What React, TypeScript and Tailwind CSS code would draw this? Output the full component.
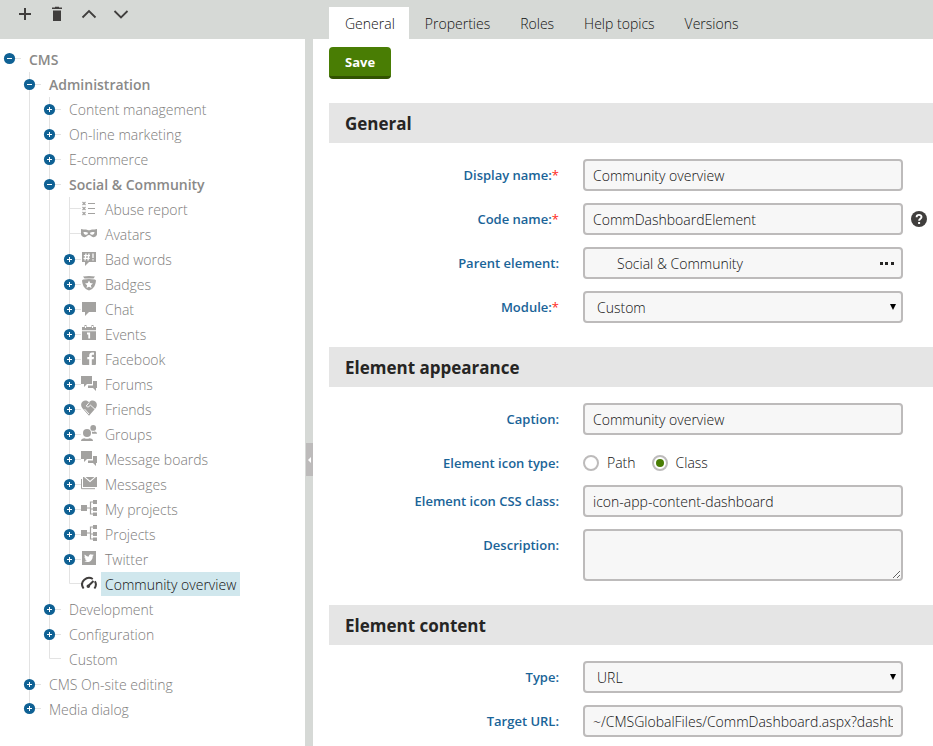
import type { ReactNode } from "react";

type IconName =
  | "list" | "mask" | "badWords" | "badge" | "chat" | "calendar" | "facebook" | "bubbles"
  | "heart" | "group" | "mail" | "scheme" | "twitter" | "gauge";

const icons: Record<IconName, ReactNode> = {
  list: (
    <g stroke="currentColor" strokeWidth="1.1" fill="none">
      <path d="M7 3.5h7M7 8.5h7M7 13.5h7" />
      <path d="M1.5 2l3 3m0-3l-3 3M1.5 7l3 3m0-3l-3 3M1.5 12l3 3m0-3l-3 3" />
    </g>
  ),
  mask: (
    <path
      fillRule="evenodd"
      d="M0 4c2 .8 3.600 .3 5 .4 1.200 .100 2 .8 3 .8s1.800-.7 3-.8c1.400-.1 3 .4 5-.4v5.500c-.7 1.700-2 2.700-3.700 2.700-1.900 0-2.700-2.200-4.300-2.200S5.600 12.200 3.700 12.200C2 12.200.7 11.200 0 9.500zM2.400 7.300c.4 1.900 1.500 2.500 2.800 2.500 1 0 1.700-.9 1.800-2-1.400-1-3-1.200-4.600-.5zm11.200 0c-.4 1.900-1.500 2.500-2.800 2.500-1 0-1.700-.9-1.800-2 1.400-1 3-1.200 4.600-.5z"
    />
  ),
  badWords: (
    <g>
      <path d="M1 2h14v10H8l-4 4v-4H1z" />
      <path d="M5 3.500L4 10.500M8 3.500L7 10.500M2.800 5.700h6.200M2.500 8.400h6.200M12 3.500v4.500M12 9.200v1.400" stroke="#fff" strokeWidth="1.300" fill="none" />
    </g>
  ),
  badge: (
    <g>
      <path d="M2 1.500Q8 .3 14 1.500L12.500 3.500H3.500zM2 4.500Q8 3.500 14 4.500L15 5.500C14.500 10 13 14 8 15.500 3 14 1.500 10 1 5.500z" />
      <path fill="#fff" d="M8 5.500l1.200 2.600 2.800.3-2.100 1.900.6 2.800L8 11.700l-2.500 1.400.6-2.800L4 8.400l2.800-.3z" />
    </g>
  ),
  chat: <path d="M1 2h14v10H8l-4 4v-4H1z" />,
  calendar: (
    <g>
      <path d="M1 2h14v3.200H1zM1 6.200h14V15H1z" />
      <path d="M3.500 0v3h2V0zM10.500 0v3h2V0z" />
      <path d="M4.500 1v2M11.500 1v2" stroke="#fff" strokeWidth="1" />
      <path d="M6 8.500h2.200V13.500" stroke="#fff" strokeWidth="1.800" fill="none" />
    </g>
  ),
  facebook: (
    <g>
      <rect x="1" y="1" width="14" height="14" rx="1" />
      <path fill="#fff" d="M8.200 15V9.300H6.300V7h1.900V5.400C8.200 3.500 9.400 2.500 11.100 2.500H13v2.300h-1.200c-.8 0-1 .4-1 1V7H13l-.3 2.300h-1.900V15z" />
    </g>
  ),
  bubbles: <path d="M0 1h11v8H6l-3 3V9H0zM12 6h4v7h-1v3l-3-3H7v-2.500h5z" />,
  heart: (
    <g>
      <path d="M8 2.200C9.700.2 12.500 0 14.300 1.500c2 1.700 2 4.500.5 6.500L8 15.800 1.200 8C-.3 6-.3 3.200 1.700 1.500 3.500 0 6.300.2 8 2.200z" />
      <path d="M1 9.200l5.500 6M3.500 9l4.500 5M8.200 2.500L5.200 6l1.800 1.200 2.500-2 5 4.500" stroke="#fff" strokeWidth=".9" fill="none" />
    </g>
  ),
  group: (
    <g>
      <circle cx="6" cy="8" r="4" />
      <path d="M0 16c0-2 1.500-2.600 3.500-2.800Q6 14.400 8.500 13.200c2 .2 3.500.8 3.500 2.800z" />
      <circle cx="12.200" cy="2.900" r="2.900" />
      <path d="M10.800 6.500q1.400.8 2.800 0c1.600.2 2.400.8 2.400 2.300h-4.800z" />
    </g>
  ),
  mail: (
    <g>
      <path d="M2 2h1l6 5.300L15 2h1v10H2z" />
      <path d="M4.500 2h9L9 5.800z" />
      <path d="M.5 4v9.700H14" stroke="currentColor" fill="none" />
    </g>
  ),
  scheme: (
    <g>
      <path d="M0 5h6v6H0zM12 0h4v4h-4zM12 7h4v4h-4zM12 12.500h4V16h-4z" />
      <path d="M6 8h3M12 2H9.500v12H12M9.500 9H12" stroke="currentColor" strokeWidth="1.200" fill="none" />
    </g>
  ),
  twitter: (
    <g>
      <path d="M1 1h14v14H1z" />
      <path
        fill="#fff"
        d="M12.800 5l-1.200.4c.4-.3.700-.6.9-1.100l-1.300.5c-1.400-1.400-3.700-.2-3.300 1.800-1.700-.1-3.100-.8-4.100-2.100-.6 1-.3 2.100.6 2.700l-.9-.2c0 1 .6 1.700 1.500 2H4.100c.3.800 1 1.300 1.900 1.300-.8.6-1.700.9-2.700.8 3.900 2.400 8.500-.2 8.400-4.900z"
      />
    </g>
  ),
  gauge: (
    <g stroke="currentColor" fill="none" strokeWidth="2">
      <path d="M2.600 13.500C.5 10.500.7 7 3.300 4.700 5.900 2.500 9.300 2.400 11.800 4M13.900 6.200c1.400 2.300 1.300 5-.5 7.300" />
      <path d="M6.800 11.500L12.500 6" strokeLinecap="butt" />
      <circle cx="7.300" cy="11.200" r=".8" />
    </g>
  ),
};

function TreeIcon({ name }: { name: IconName }) {
  return (
    <svg className="h-4 w-4 shrink-0" viewBox="0 0 16 16" fill="currentColor" aria-hidden="true">
      {icons[name]}
    </svg>
  );
}

interface TreeNode {
  label: string;
  icon?: IconName;
  leaf?: boolean;
  selected?: boolean;
  children?: TreeNode[];
}

const tree: TreeNode = {
  label: "CMS",
  children: [
    {
      label: "Administration",
      children: [
        { label: "Content management" },
        { label: "On-line marketing" },
        { label: "E-commerce" },
        {
          label: "Social & Community",
          children: [
            { label: "Abuse report", icon: "list", leaf: true },
            { label: "Avatars", icon: "mask", leaf: true },
            { label: "Bad words", icon: "badWords" },
            { label: "Badges", icon: "badge" },
            { label: "Chat", icon: "chat" },
            { label: "Events", icon: "calendar" },
            { label: "Facebook", icon: "facebook" },
            { label: "Forums", icon: "bubbles" },
            { label: "Friends", icon: "heart" },
            { label: "Groups", icon: "group" },
            { label: "Message boards", icon: "bubbles" },
            { label: "Messages", icon: "mail" },
            { label: "My projects", icon: "scheme" },
            { label: "Projects", icon: "scheme" },
            { label: "Twitter", icon: "twitter" },
            { label: "Community overview", icon: "gauge", leaf: true, selected: true },
          ],
        },
        { label: "Development" },
        { label: "Configuration" },
        { label: "Custom", leaf: true },
      ],
    },
    { label: "CMS On-site editing" },
    { label: "Media dialog" },
  ],
};

interface JointProps {
  leaf: boolean;
  open: boolean;
  last: boolean;
  root: boolean;
}

/* Branch lines of one row, with the expand knob on top of them. */
function Joint({ leaf, open, last, root }: JointProps) {
  const y = leaf || last ? 11.5 : 12.5;
  return (
    <svg className="h-[25px] w-[21px]" viewBox="0 0 21 25" aria-hidden="true">
      {!root && <path d={last ? `M9.500 0V${y}` : "M9.500 0V25"} stroke="#e3e3e3" />}
      <path d={`M9.500 ${y}H21`} stroke="#e3e3e3" />
      {!leaf && (
        <>
          <circle cx="9.500" cy={y} r="5.600" fill="#0f6194" />
          <path d={open ? `M7 ${y}h5` : `M7 ${y}h5M9.500 ${y - 2.5}v5`} stroke="#fff" />
        </>
      )}
    </svg>
  );
}

function Branch({ node, guides, last }: { node: TreeNode; guides: boolean[]; last: boolean }) {
  const open = !!node.children;
  const root = guides.length === 0;
  const joint = <Joint leaf={!!node.leaf} open={open} last={last} root={root} />;
  const childGuides = [...guides, !last];
  const kids = node.children ?? [];
  return (
    <li>
      <div className="flex h-[25px]">
        {guides.map((line, i) => (
          <span key={i} className="flex w-5 shrink-0 pl-[9px]">
            {line && <span className="w-px bg-[#e3e3e3]" />}
          </span>
        ))}
        {node.leaf ? (
          <span className="shrink-0">{joint}</span>
        ) : (
          <button type="button" className="shrink-0" aria-label={(open ? "Collapse " : "Expand ") + node.label}>
            {joint}
          </button>
        )}
        <a
          href="#"
          className={
            "flex items-start whitespace-nowrap leading-[22px] " +
            (node.icon ? "" : "pl-2 ") +
            (node.selected ? "text-[#111111]" : open ? "font-semibold text-[#8a8988]" : "text-[#7d7c7b]")
          }
        >
          {node.icon && (
            <span className={"pt-[3px] " + (node.selected ? "text-[#403e3d]" : "text-[#a3a2a0]")}>
              <TreeIcon name={node.icon} />
            </span>
          )}
          {node.icon ? (
            <span className={"ml-1 px-1 pt-[2px] " + (node.selected ? "bg-[#d0e7ed]" : "")}>{node.label}</span>
          ) : (
            <span className="pt-[2px]">{node.label}</span>
          )}
        </a>
      </div>
      {open && (
        <ul>
          {kids.map((kid, i) => (
            <Branch key={kid.label} node={kid} guides={childGuides} last={i === kids.length - 1} />
          ))}
        </ul>
      )}
    </li>
  );
}

const tools: { label: string; drawing: ReactNode }[] = [
  { label: "New element", drawing: <path d="M2 8h12M8 2v12" strokeWidth="2" /> },
  {
    label: "Delete element",
    drawing: <path d="M3 3V1.500h3V.7h4v.8h3V3zM4 4.500h8V15H4z" fill="currentColor" stroke="none" />,
  },
  { label: "Move up", drawing: <path d="M1.500 11.500L8 5l6.500 6.500" strokeWidth="1.800" /> },
  { label: "Move down", drawing: <path d="M1.500 5L8 11.500L14.500 5" strokeWidth="1.800" /> },
];

const control = "rounded-sm border-2 border-[#bdbbbb] bg-[#f7f7f7] text-[#111111]";

function Section({ title, children }: { title: string; children: ReactNode }) {
  return (
    <section className="mt-6">
      <h2 className="bg-[#e5e5e5] px-4 pt-[2px] text-[17px] leading-[38px] font-bold text-[#262524]">{title}</h2>
      <div className="mt-4 flex flex-col gap-3">{children}</div>
    </section>
  );
}

interface RowProps {
  label: string;
  id: string;
  required?: boolean;
  children: ReactNode;
}

function Row({ label, id, required, children }: RowProps) {
  return (
    <div className="flex items-start gap-6">
      <label id={id + "-label"} htmlFor={id} className="w-[230px] shrink-0 pt-[6px] text-right text-[13px] leading-5 font-semibold text-[#1a6498]">
        {label}:{required && <span className="font-normal text-[#ff2a1a]">*</span>}
      </label>
      {children}
    </div>
  );
}

function TextBox({ id, value }: { id: string; value: string }) {
  return <input id={id} type="text" defaultValue={value} className={"h-8 w-80 px-2 " + control} />;
}

function DropDown({ id, value }: { id: string; value: string }) {
  return (
    <div className="relative w-80">
      <select id={id} className={"block h-8 w-full appearance-none px-3 pt-[2px] " + control}>
        <option>{value}</option>
      </select>
      <svg className="pointer-events-none absolute top-[13px] right-[7px] h-[6px] w-[6px]" viewBox="0 0 6 6" aria-hidden="true">
        <path d="M0 0h6L3 6z" fill="#000" />
      </svg>
    </div>
  );
}

function Radio({ label, checked }: { label: string; checked?: boolean }) {
  return (
    <label className="flex items-center gap-2 leading-5">
      <input
        type="radio"
        name="icon-type"
        defaultChecked={checked}
        className="h-4 w-4 appearance-none rounded-full border-2 border-[#bdbbbb] bg-white p-[2px] before:block before:h-2 before:w-2 before:rounded-full checked:before:bg-[#497d04]"
      />
      {label}
    </label>
  );
}

export default function App() {
  return (
    <div className="flex h-screen overflow-hidden bg-white font-['Open_Sans','Segoe_UI',sans-serif] text-sm font-light text-[#111111]">
      <aside className="flex w-[305px] shrink-0 flex-col">
        <div className="flex h-[39px] items-start bg-[#d6d9d6] pt-[6px] pl-[9px] text-[#403e3d]">
          {tools.map((tool) => (
            <button key={tool.label} type="button" aria-label={tool.label} className="flex w-8 justify-center">
              <svg className="h-4 w-4" viewBox="0 0 16 16" fill="none" stroke="currentColor" aria-hidden="true">
                {tool.drawing}
              </svg>
            </button>
          ))}
        </div>
        <ul className="pt-2">
          <Branch node={tree} guides={[]} last />
        </ul>
      </aside>

      <div className="flex w-2 shrink-0 flex-col items-end bg-[#d6d9d6] pt-[443px]">
        <button type="button" aria-label="Collapse tree" className="flex h-[33px] w-[7px] items-center justify-center bg-[#bdbbbb]">
          <svg className="h-[6px] w-[3px]" viewBox="0 0 3 6" aria-hidden="true">
            <path d="M3 0v6L0 3z" fill="#fff" />
          </svg>
        </button>
      </div>

      <main className="flex min-w-0 flex-1 flex-col">
        <nav className="flex h-[39px] shrink-0 items-end bg-[#d6d9d6] pl-4">
          {["General", "Properties", "Roles", "Help topics", "Versions"].map((tab, i) => (
            <a key={tab} href="#" className={"pt-[2px] pr-[14px] pl-4 leading-[30px] whitespace-nowrap " + (i === 0 ? "bg-white" : "")}>
              {tab}
            </a>
          ))}
        </nav>
        <form className="min-h-0 flex-1 overflow-hidden pt-2 pl-4">
          <button
            type="button"
            className="block h-8 rounded-sm border-b-[3px] border-[#315301] bg-[#497d04] px-4 pt-[2px] text-[13px] font-bold text-white"
          >
            Save
          </button>

          <Section title="General">
            <Row label="Display name" id="display-name" required>
              <TextBox id="display-name" value="Community overview" />
            </Row>
            <Row label="Code name" id="code-name" required>
              <div className="flex items-center gap-2">
                <TextBox id="code-name" value="CommDashboardElement" />
                <button type="button" aria-label="Help">
                  <svg className="h-4 w-4" viewBox="0 0 16 16" aria-hidden="true">
                    <circle cx="8" cy="8" r="8" fill="#403e3d" />
                    <path d="M5.600 6.200C5.600 3 10.600 3.200 10.500 6c0 1.700-2.400 1.800-2.400 3.800" fill="none" stroke="#fff" strokeWidth="1.900" />
                    <path d="M7.100 11h2v2h-2z" fill="#fff" />
                  </svg>
                </button>
              </div>
            </Row>
            <Row label="Parent element" id="parent-element">
              <div className={"flex h-8 w-80 items-center " + control}>
                <input id="parent-element" type="text" defaultValue="Social & Community" className="min-w-0 flex-1 bg-[#f7f7f7] pt-[2px] pl-8" />
                <button type="button" aria-label="Select parent element" className="px-[6px]">
                  <svg className="h-4 w-4" viewBox="0 0 16 16" aria-hidden="true">
                    <path d="M1 7h3v3H1zM6 7h3v3H6zM12 7h3v3h-3z" fill="#262524" />
                  </svg>
                </button>
              </div>
            </Row>
            <Row label="Module" id="module" required>
              <DropDown id="module" value="Custom" />
            </Row>
          </Section>

          <Section title="Element appearance">
            <Row label="Caption" id="caption">
              <TextBox id="caption" value="Community overview" />
            </Row>
            <Row label="Element icon type" id="icon-type">
              <div id="icon-type" role="radiogroup" aria-labelledby="icon-type-label" className="flex gap-4 pt-[6px]">
                <Radio label="Path" />
                <Radio label="Class" checked />
              </div>
            </Row>
            <Row label="Element icon CSS class" id="icon-class">
              <TextBox id="icon-class" value="icon-app-content-dashboard" />
            </Row>
            <Row label="Description" id="description">
              <textarea id="description" className={"block h-[52px] w-80 px-2 " + control} />
            </Row>
          </Section>

          <Section title="Element content">
            <Row label="Type" id="type">
              <DropDown id="type" value="URL" />
            </Row>
            <Row label="Target URL" id="target-url">
              <TextBox id="target-url" value="~/CMSGlobalFiles/CommDashboard.aspx?dashboardName=CommunityOverview" />
            </Row>
          </Section>
        </form>
      </main>
    </div>
  );
}
